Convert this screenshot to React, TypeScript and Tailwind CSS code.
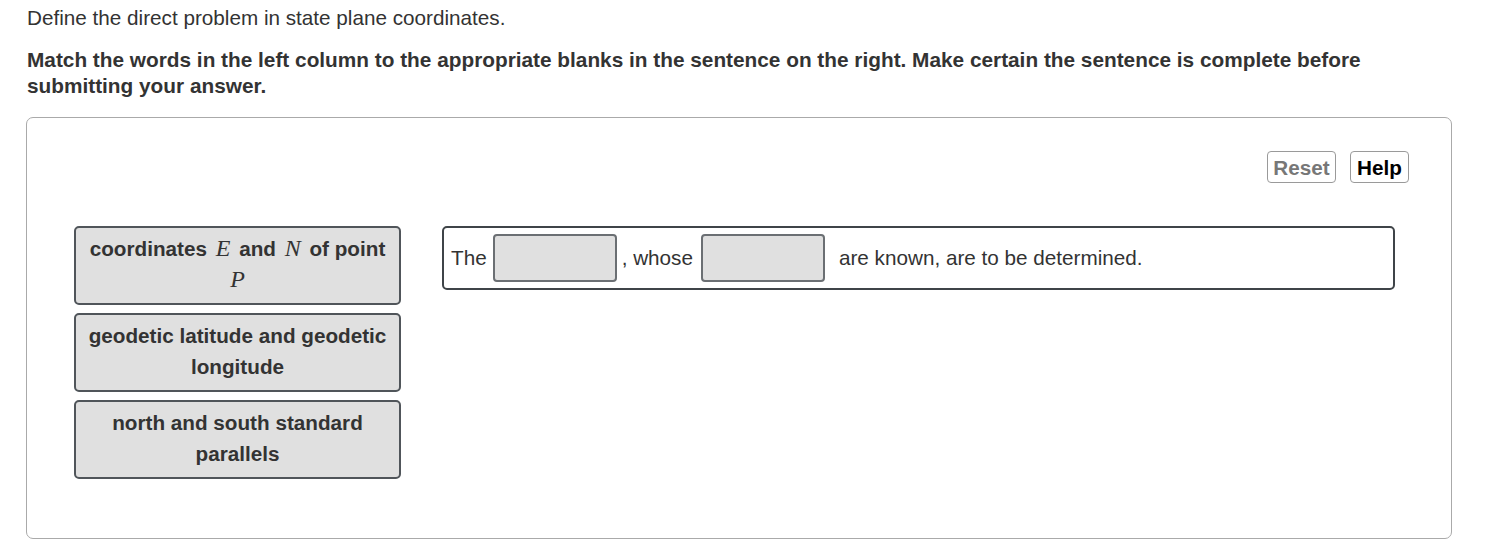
const M = ({ children }: { children: string }) => (
  <span className="font-['Liberation_Serif',serif] italic font-normal text-[24px] mx-[3px]">{children}</span>
);

const Card = ({ children }: { children: React.ReactNode }) => (
  <div className="w-[327px] h-[79px] border-2 border-[#50555a] rounded-[5px] bg-[#e0e0e0] px-[6px] pt-[4px] pb-[8px] flex items-center justify-center text-center font-bold leading-[31px] text-[#333]">
    <div>{children}</div>
  </div>
);

const Blank = ({ className }: { className?: string }) => (
  <div className={`w-[124px] h-[48px] shrink-0 border-2 border-[#6b6f73] rounded-[4px] bg-[#e0e0e0] ${className ?? ''}`} />
);

const App = () => {
  return (
    <main className="w-full min-h-screen bg-white font-['Liberation_Sans',Arial,sans-serif] text-[20.7px] text-[#333] pt-[5px]">
      {/* Question text */}
      <p className="pl-[27px] leading-[26px]">Define the direct problem in state plane coordinates.</p>
      <p className="pl-[27px] pr-[100px] mt-[16px] leading-[26px] font-bold text-[20.8px]">
        Match the words in the left column to the appropriate blanks in the sentence on the right. Make certain the
        sentence is complete before submitting your answer.
      </p>

      {/* Matching widget */}
      <section className="ml-[26px] mt-[18px] w-[1426px] h-[422px] border border-[#aaaaaa] rounded-[7px] pt-[33px] pl-[47px] pr-[42px]">
        <div className="flex justify-end gap-[14px]">
          <button className="h-[32px] w-[69px] border border-[#9a9a9a] rounded-[4px] font-bold text-[#777] bg-white">
            Reset
          </button>
          <button className="h-[32px] w-[59px] border border-[#9a9a9a] rounded-[4px] font-bold text-black bg-white">
            Help
          </button>
        </div>

        <div className="flex items-start mt-[43px]">
          <div className="flex flex-col gap-[8px]">
            <Card>
              coordinates <M>E</M> and <M>N</M> of point
              <br />
              <M>P</M>
            </Card>
            <Card>
              geodetic latitude and geodetic
              <br />
              longitude
            </Card>
            <Card>
              north and south standard
              <br />
              parallels
            </Card>
          </div>

          <div className="ml-[41px] w-[953px] h-[64px] border-2 border-[#3f4448] rounded-[5px] flex items-center pl-[7px]">
            <span>The</span>
            <Blank className="ml-[6px]" />
            <span className="ml-[5px]">, whose</span>
            <Blank className="ml-[8px]" />
            <span className="ml-[14px]">are known, are to be determined.</span>
          </div>
        </div>
      </section>
    </main>
  );
};

export default App;
